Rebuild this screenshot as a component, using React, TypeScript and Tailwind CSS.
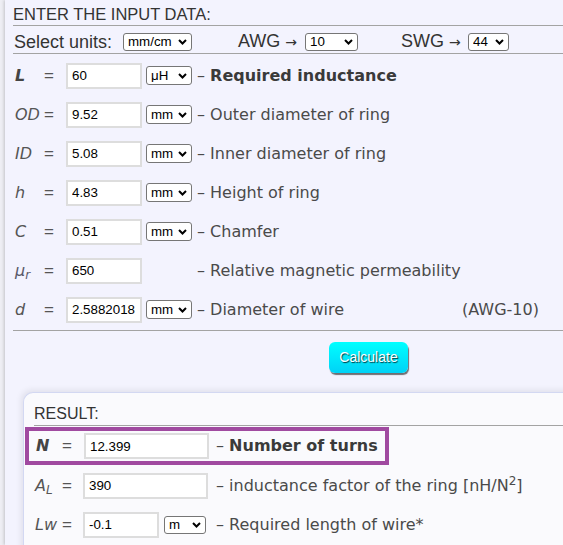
import React from "react";

function Sel({ value, className }: { value: string; className: string }) {
  return (
    <span className={`relative inline-block shrink-0 ${className}`}>
      <select
        defaultValue={value}
        className="block h-full w-full appearance-none rounded-[3px] border border-[#767676] bg-white pl-[4px] text-[13.33px] leading-none text-black outline-none font-['Liberation_Sans',Arial,sans-serif]"
      >
        <option>{value}</option>
      </select>
      <svg
        className="pointer-events-none absolute right-[5px] top-1/2 -translate-y-1/2"
        width="9"
        height="6"
        viewBox="0 0 9 6"
      >
        <path d="M1 1L4.5 4.5L8 1" fill="none" stroke="#000" strokeWidth="2" />
      </svg>
    </span>
  );
}

function Inp({ value, className }: { value: string; className: string }) {
  return (
    <input
      readOnly
      value={value}
      className={`h-[26px] shrink-0 border-2 border-[#dddddd] bg-white pl-[4px] text-[13.33px] text-black outline-none font-['Liberation_Sans',Arial,sans-serif] ${className}`}
    />
  );
}

function Row({
  label,
  value,
  unit,
  children,
}: {
  label: React.ReactNode;
  value: string;
  unit?: string;
  children: React.ReactNode;
}) {
  return (
    <div className="flex h-[39px] items-center">
      <div className="ml-[2px] flex w-[39px] shrink-0 items-center justify-between text-[16px] text-[#555] font-['DejaVu_Sans',Verdana,sans-serif]">
        <span>{label}</span>
        <span className="text-[17px] font-['Liberation_Sans',Arial,sans-serif]">=</span>
      </div>
      <Inp value={value} className="ml-[12px] w-[76px]" />
      {unit ? (
        <Sel value={unit} className="ml-[4px] h-[19px] w-[46px]" />
      ) : (
        <span className="ml-[4px] w-[46px] shrink-0" />
      )}
      <div className="ml-[5px] flex items-center whitespace-nowrap text-[16px] text-[#4a4a4a] font-['DejaVu_Sans',Verdana,sans-serif]">
        {children}
      </div>
    </div>
  );
}

export default function App() {
  return (
    <div className="h-[545px] w-[563px] overflow-hidden bg-[#eeeef4]">
      <div className="ml-[5px] h-[545px] w-[760px] bg-[#f3f3fe] pl-[8px] shadow-[-1px_0_3px_rgba(0,0,0,0.18)]">
        <div className="h-[26px] border-b border-[#a3a3a3] pt-[5px] text-[16.5px] leading-[18px] text-[#333] font-['Liberation_Sans',Arial,sans-serif]">
          ENTER THE INPUT DATA:
        </div>
        <div className="flex h-[28px] items-center border-b border-[#a3a3a3] pt-[4px] text-[18px] leading-[20px] text-[#333] font-['Liberation_Sans',Arial,sans-serif]">
          <span className="w-[110px] shrink-0 pl-[1px]">Select units:</span>
          <Sel value="mm/cm" className="h-[18px] w-[69px]" />
          <span className="w-[113px] shrink-0 pl-[46px]">
            AWG <span className="font-['DejaVu_Sans',sans-serif] text-[14px]">→</span>
          </span>
          <Sel value="10" className="h-[18px] w-[53px]" />
          <span className="w-[110px] shrink-0 pl-[43px]">
            SWG <span className="font-['DejaVu_Sans',sans-serif] text-[14px]">→</span>
          </span>
          <Sel value="44" className="h-[18px] w-[41px]" />
        </div>

        <div className="border-b border-[#a3a3a3] pb-[1px] pt-[2px]">
          <Row label={<span className="font-bold italic text-[#444]">L</span>} value="60" unit="μH">
            <span>–&nbsp;</span>
            <span className="font-bold text-[#3a3a3a]">Required inductance</span>
          </Row>
          <Row label={<i>OD</i>} value="9.52" unit="mm">
            <span>– Outer diameter of ring</span>
          </Row>
          <Row label={<i>ID</i>} value="5.08" unit="mm">
            <span>– Inner diameter of ring</span>
          </Row>
          <Row label={<i>h</i>} value="4.83" unit="mm">
            <span>– Height of ring</span>
          </Row>
          <Row label={<i>C</i>} value="0.51" unit="mm">
            <span>– Chamfer</span>
          </Row>
          <Row
            label={
              <i className="text-[#5a5a6a]">
                μ<sub className="text-[12px]">r</sub>
              </i>
            }
            value="650"
          >
            <span>– Relative magnetic permeability</span>
          </Row>
          <Row label={<i>d</i>} value="2.5882018" unit="mm">
            <span className="w-[265px] shrink-0">– Diameter of wire</span>
            <span>(AWG-10)</span>
          </Row>
        </div>

        <button className="ml-[316px] mt-[11px] block h-[31px] w-[79px] rounded-[6px] bg-linear-to-b from-[#00ffff] to-[#00d2f6] text-[14px] text-white shadow-[1px_2px_1px_rgba(0,0,0,0.55)] [text-shadow:1px_1px_1px_rgba(0,0,0,0.75)] font-['Liberation_Sans',Arial,sans-serif]">
          Calculate
        </button>

        <div className="ml-[10px] mt-[19px] h-[200px] rounded-tl-[10px] border-l border-t border-[#d3d8f2] bg-[#fafafd] shadow-[-2px_-2px_6px_rgba(0,0,0,0.08)]">
          <div className="ml-[10px] h-[33px] border-b border-[#a3a3a3] pt-[12px] text-[16px] leading-[18px] text-[#333] font-['Liberation_Sans',Arial,sans-serif]">
            RESULT:
          </div>
          <div className="ml-[1px] mt-[1px] flex h-[38px] w-[364px] items-center border-[4px] border-[#a04aa0] pl-[7px]">
            <div className="flex w-[36px] shrink-0 items-center justify-between text-[16px] text-[#444] font-['DejaVu_Sans',Verdana,sans-serif]">
              <span className="font-bold italic">N</span>
              <span className="text-[17px] text-[#555] font-['Liberation_Sans',Arial,sans-serif]">=</span>
            </div>
            <Inp value="12.399" className="ml-[12px] w-[125px]" />
            <div className="ml-[7px] whitespace-nowrap text-[16px] text-[#4a4a4a] font-['DejaVu_Sans',Verdana,sans-serif]">
              <span>–&nbsp;</span>
              <span className="font-bold text-[#3a3a3a]">Number of turns</span>
            </div>
          </div>
          <div className="mt-[1px] flex h-[39px] items-center pl-[11px]">
            <div className="flex w-[37px] shrink-0 items-center justify-between text-[16px] text-[#555] font-['DejaVu_Sans',Verdana,sans-serif]">
              <i>
                A<sub className="text-[12px]">L</sub>
              </i>
              <span className="text-[17px] font-['Liberation_Sans',Arial,sans-serif]">=</span>
            </div>
            <Inp value="390" className="ml-[11px] w-[125px]" />
            <div className="ml-[8px] whitespace-nowrap text-[16px] text-[#4a4a4a] font-['DejaVu_Sans',Verdana,sans-serif]">
              – inductance factor of the ring [nH/N<sup className="text-[12px]">2</sup>]
            </div>
          </div>
          <div className="flex h-[39px] items-center pl-[11px]">
            <div className="flex w-[37px] shrink-0 items-center justify-between text-[16px] text-[#555] font-['DejaVu_Sans',Verdana,sans-serif]">
              <i>Lw</i>
              <span className="text-[17px] font-['Liberation_Sans',Arial,sans-serif]">=</span>
            </div>
            <Inp value="-0.1" className="ml-[11px] w-[76px]" />
            <Sel value="m" className="ml-[5px] h-[18px] w-[42px]" />
            <div className="ml-[10px] whitespace-nowrap text-[16px] text-[#4a4a4a] font-['DejaVu_Sans',Verdana,sans-serif]">
              – Required length of wire*
            </div>
          </div>
        </div>
      </div>
    </div>
  );
}
